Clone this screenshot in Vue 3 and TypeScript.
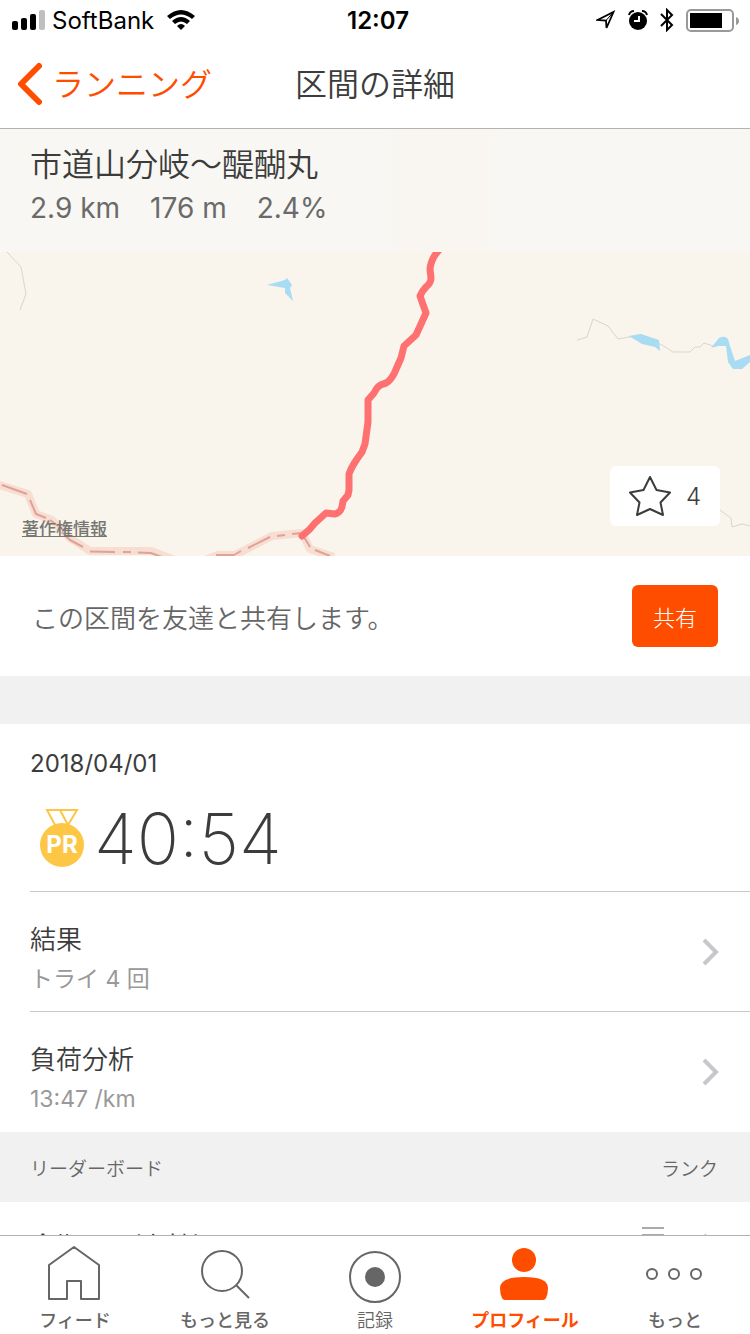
<script setup lang="ts">
import { ref } from 'vue'

interface Tab {
  id: string
  label: string
  light?: boolean
}

interface DetailRow {
  title: string
  detail: string
}

const tabs: Tab[] = [
  { id: 'feed', label: 'フィード' },
  { id: 'explore', label: 'もっと見る' },
  { id: 'record', label: '記録', light: true },
  { id: 'profile', label: 'プロフィール' },
  { id: 'more', label: 'もっと' },
]

const stats: string[] = ['2.9 km', '176 m', '2.4%']

const rows: DetailRow[] = [
  { title: '結果', detail: 'トライ 4 回' },
  { title: '負荷分析', detail: '13:47 /km' },
]

const activeTab = ref('profile')
</script>

<template>
  <div class="screen">
    <header class="top">
      <div class="status">
        <div class="status-side">
          <svg class="signal" viewBox="0 0 34 20" width="34" height="20" aria-hidden="true">
            <rect x="0" y="11" width="6" height="9" rx="2" />
            <rect x="9" y="8" width="6" height="12" rx="2" />
            <rect x="18" y="4" width="6" height="16" rx="2" />
            <rect x="27" y="0" width="6" height="20" rx="2" fill="#bfbfbf" />
          </svg>
          <span class="carrier">SoftBank</span>
          <svg class="wifi" viewBox="0 0 28 20" width="28" height="20" aria-hidden="true">
            <path d="M0 6Q14-6 28 6L25 9Q14 0 3 9Z" />
            <path d="M5 11Q14 3 23 11L20 14Q14 9 8 14Z" />
            <path d="M10 16Q14 12 18 16L14 20Z" />
          </svg>
        </div>
        <time class="clock">12:07</time>
        <div class="status-side status-right">
          <svg viewBox="0 0 20 22" width="20" height="22" aria-hidden="true">
            <path d="M1.500 11 17.500 3 10.500 19 10 11.500Z" fill="none" stroke="#000" stroke-width="1.800" />
            <path d="M10 11.500 17.500 3" fill="none" stroke="#000" stroke-width="1" />
          </svg>
          <svg viewBox="0 0 20 20" width="20" height="20" aria-hidden="true">
            <circle cx="10" cy="11" r="9" />
            <path d="M1 5Q2 1 6 1M14 1Q18 1 19 5" fill="none" stroke="#000" stroke-width="2" />
            <path d="M11 6V11H6" fill="none" stroke="#fff" stroke-width="2" />
          </svg>
          <svg viewBox="0 0 14 24" width="14" height="24" aria-hidden="true">
            <path d="M1 6 12 17 7 22V2L12 7 1 18" fill="none" stroke="#000" stroke-width="2" />
          </svg>
          <svg class="battery" viewBox="0 0 54 24" width="54" height="24" aria-hidden="true">
            <rect x="1" y="2" width="46" height="21" rx="4" fill="none" stroke="#999" stroke-width="2" />
            <rect x="4" y="5" width="32" height="15" />
            <path d="M50 9Q53 10 53 13T50 17Z" fill="#999" />
          </svg>
        </div>
      </div>
      <nav class="navbar">
        <button class="back" type="button">
          <svg viewBox="0 0 26 44" width="26" height="44" aria-hidden="true">
            <path d="M23 4 5 22 23 40" fill="none" stroke="#ff4d00" stroke-width="6" stroke-linecap="round" stroke-linejoin="round" />
          </svg>
          <span class="nav-text">ランニング</span>
        </button>
        <h1 class="nav-text">区間の詳細</h1>
      </nav>
    </header>

    <main class="content">
      <section class="segment">
        <h2 class="segment-name">市道山分岐〜醍醐丸</h2>
        <div class="stats">
          <span v-for="s in stats" :key="s">{{ s }}</span>
        </div>
      </section>

      <section class="map">
        <svg class="map-art" viewBox="0 252 750 304" preserveAspectRatio="xMidYMid slice" aria-hidden="true">
          <g fill="none" stroke="#d6d6d0" stroke-width="1">
            <path d="M7 252 21 267 26 294 20 310" />
            <path d="M577 340 587 337 593 319 608 326 618 339 640 335 662 345 673 352H690L695 347H700L704 343 716 347" />
            <path d="M720 510 731 518 732 527 742 524 750 526" />
          </g>
          <g fill="#a9dcf2">
            <path d="M267 285 285 280 287 278 292 285 290 288 293 301 285 293V288Z" />
            <path d="M629 336 641 334 659 340 660 351 655 347 642 344Z" />
            <path d="M711 348 719 338Q725 335 728 339L730 346 735 361 750 355V362L742 369H733L728 362 726 346 718 346Z" />
          </g>
          <g fill="none" stroke-linejoin="round">
            <g stroke="#f8ddd3" stroke-width="8">
              <path d="M-4 484 28 494 36 514 52 520 70 538 90 551H151L180 562" />
              <path d="M200 562 218 555H235L272 536 302 533 310 549 334 557" />
            </g>
            <g stroke="#dfa294" stroke-width="2">
              <path d="M2 485 27 494M30 500 36 514 46 518M50 520 58 526M62 532 70 540 83 547M90 551.500 115 552M123 552H131M138 552.500 151 553 162 557M216 555H234L241 551M248 548 270 537M277 536 285 535M292 534 302 533M304 537 310 547M315 550 330 556" />
            </g>
            <path d="M440 249Q431 258 430 269L431 278Q431 283 426 287 422 291 420 296L426 313 416 335 404 346 401 358 397 367Q391 383 383 384 378 385 374 393L368 400V422L365 444 362 452 357 459Q351 468 349 474V490L348 495 343 501 342 507Q340 513 335 514L326 513 315 523Q310 530 302 536" stroke="#ff7070" stroke-width="7" stroke-linecap="round" />
          </g>
        </svg>
        <a class="legal" href="#legal">著作権情報</a>
        <button class="star" type="button" aria-label="お気に入り 4">
          <svg viewBox="0 0 44 42" width="44" height="42" aria-hidden="true">
            <path d="M22 2 28.500 15 42 17.500 32.500 27.500 35 40 22 34 9 40 11.500 27.500 2 17.500 15.500 15Z" fill="none" stroke="#3c3c3c" stroke-width="2" stroke-linejoin="round" />
          </svg>
          <span>4</span>
        </button>
      </section>

      <section class="share">
        <p class="share-text">この区間を友達と共有します。</p>
        <button class="share-button" type="button">共有</button>
      </section>

      <div class="gap"></div>

      <section class="effort">
        <time class="date">2018/04/01</time>
        <div class="result">
          <svg viewBox="0 0 44 58" width="44" height="58" aria-hidden="true">
            <path d="M7 1H37L28 16H15ZM20 1 28 16" fill="none" stroke="#fdc745" stroke-width="2" />
            <circle cx="22" cy="36" r="22" fill="#fdc745" />
            <text class="medal-text" x="22" y="44" text-anchor="middle">PR</text>
          </svg>
          <span class="elapsed">40:54</span>
        </div>
      </section>

      <section class="rows">
        <button v-for="r in rows" :key="r.title" class="row" type="button">
          <span class="row-copy">
            <span class="row-title">{{ r.title }}</span>
            <span class="row-detail">{{ r.detail }}</span>
          </span>
          <svg viewBox="0 0 18 28" width="18" height="28" aria-hidden="true">
            <path d="M2 2 14 14 2 26" fill="none" stroke="#c7c7cc" stroke-width="4" />
          </svg>
        </button>
      </section>

      <div class="board-head">
        <span>リーダーボード</span>
        <span>ランク</span>
      </div>
      <button class="board-row" type="button">
        <span class="board-name">全期間 （女性）</span>
        <span class="board-rank">
          <svg viewBox="0 0 24 28" width="24" height="28" aria-hidden="true">
            <path d="M0 1H22M0 8H22M0 15H22" fill="none" stroke="#aaa" stroke-width="2" />
          </svg>
          <svg viewBox="0 0 18 32" width="18" height="32" aria-hidden="true">
            <path d="M2 8 14 20 2 32" fill="none" stroke="#c7c7cc" stroke-width="4" />
          </svg>
        </span>
      </button>
    </main>

    <nav class="tabbar">
      <button
        v-for="t in tabs"
        :key="t.id"
        type="button"
        class="tab"
        :class="{ active: activeTab === t.id, light: t.light }"
        @click="activeTab = t.id"
      >
        <svg class="tab-icon" viewBox="0 0 60 60" width="60" height="60" fill="none" stroke="currentColor" stroke-width="2" stroke-linejoin="round" aria-hidden="true">
          <path v-if="t.id === 'feed'" d="M29 5 54 23V57H36V39H22V57H4V23Z" />
          <template v-else-if="t.id === 'explore'">
            <circle cx="27" cy="29" r="20" />
            <path d="M41 43 54 56" />
          </template>
          <template v-else-if="t.id === 'record'">
            <circle cx="30" cy="35" r="25" />
            <circle cx="30" cy="35" r="10" fill="currentColor" stroke="none" />
          </template>
          <g v-else-if="t.id === 'profile'" fill="currentColor" stroke="none">
            <circle cx="29" cy="18" r="12" />
            <path d="M5 46Q5 35 29 35T53 46Q53 52 51 56 50 58 48 58H10Q8 58 7 56 5 52 5 46Z" />
          </g>
          <g v-else>
            <circle cx="7" cy="32" r="5" />
            <circle cx="29" cy="32" r="5" />
            <circle cx="51" cy="32" r="5" />
          </g>
        </svg>
        <span class="tab-label">{{ t.label }}</span>
      </button>
    </nav>
  </div>
</template>

<style>
body {
  margin: 0;
  background: #fff;
}
</style>

<style scoped>
.screen {
  display: flex;
  flex-direction: column;
  height: 100vh;
  overflow: hidden;
  background: #fff;
  color: #3c3c3c;
  font-family: Inter, "Noto Sans CJK JP", sans-serif;
  font-weight: 350;
}

.screen * {
  box-sizing: border-box;
}

.screen svg {
  display: block;
  flex-shrink: 0;
}

button {
  margin: 0;
  padding: 0;
  border: 0;
  background: none;
  color: inherit;
  font: inherit;
  text-align: left;
  cursor: pointer;
}

h1,
h2,
p {
  margin: 0;
  font-weight: inherit;
}

.top {
  flex-shrink: 0;
  border-bottom: 1px solid #b2b2b2;
}

.status,
.navbar {
  display: grid;
  grid-template-columns: 1fr auto 1fr;
  align-items: center;
}

.status {
  height: 40px;
  padding: 0 10px 0 12px;
  color: #000;
}

.status-side {
  display: flex;
  align-items: center;
  font-size: 24px;
  font-weight: 400;
}

.carrier {
  margin: 0 13px 0 6px;
}

.status-right {
  justify-content: flex-end;
  gap: 12px;
}

.clock {
  padding-left: 4px;
  font-size: 24px;
  font-weight: 600;
}

.navbar {
  height: 88px;
  padding: 0 16px;
}

.back {
  display: flex;
  align-items: center;
  gap: 10px;
  color: #ff4d00;
}

.nav-text {
  padding-bottom: 4px;
  font-size: 32px;
}

.content {
  flex: 1;
  min-height: 0;
  overflow: hidden;
}

.segment {
  height: 123px;
  padding: 12px 30px;
  background: linear-gradient(90deg, #f8f7f3 50%, #f9f5f1 56%, #f9f5f1 62%, #f8f7f3 68%);
}

.segment-name {
  font-size: 32px;
  line-height: 48px;
}

.stats {
  display: flex;
  gap: 30px;
  color: #6a6a6a;
  font-size: 28px;
  font-weight: 400;
  line-height: 38px;
}

.map {
  position: relative;
  height: 304px;
  background: #f9f4ec;
}

.screen .map-art {
  width: 100%;
  height: 100%;
}

.legal {
  position: absolute;
  left: 22px;
  bottom: 15px;
  color: #777772;
  font-size: 17px;
  font-weight: 500;
  line-height: 24px;
}

.star {
  position: absolute;
  right: 30px;
  bottom: 30px;
  display: flex;
  align-items: center;
  gap: 14px;
  height: 60px;
  padding: 0 19px 0 18px;
  border-radius: 6px;
  background: #fff;
  font-size: 24px;
}

.share {
  display: flex;
  align-items: center;
  justify-content: space-between;
  height: 120px;
  padding: 0 32px;
}

.share-text {
  color: #666;
  font-size: 26px;
}

.share-button {
  height: 62px;
  padding: 0 21px;
  border-radius: 6px;
  background: #ff4d00;
  color: #fff;
  font-size: 22px;
  font-weight: 300;
}

.gap {
  height: 48px;
  background: #f1f1f1;
}

.effort {
  height: 168px;
  margin-left: 30px;
  padding-top: 24px;
  border-bottom: 1px solid #c8c8c8;
}

.date {
  display: block;
  font-size: 24px;
  font-weight: 400;
  line-height: 32px;
}

.result {
  display: flex;
  align-items: center;
  gap: 10px;
  height: 88px;
  margin-top: 14px;
  padding-left: 10px;
}

.medal-text {
  fill: #fff;
  font-size: 24px;
  font-weight: 700;
}

.elapsed {
  font-size: 70px;
  font-weight: 200;
}

.row {
  display: flex;
  align-items: center;
  justify-content: space-between;
  width: calc(100% - 30px);
  height: 120px;
  margin-left: 30px;
  padding-right: 30px;
}

.row:first-child {
  border-bottom: 1px solid #c8c8c8;
}

.row-copy {
  display: flex;
  flex-direction: column;
  padding-top: 14px;
}

.row-title {
  font-size: 26px;
  line-height: 40px;
}

.row-detail {
  color: #999;
  font-size: 23px;
  font-weight: 400;
  line-height: 38px;
}

.board-head {
  display: flex;
  align-items: center;
  justify-content: space-between;
  height: 70px;
  padding: 0 32px 0 30px;
  background: #f1f1f1;
  color: #666;
  font-size: 19px;
}

.board-row {
  display: flex;
  align-items: flex-start;
  justify-content: space-between;
  width: 100%;
  height: 88px;
  padding: 25px 30px;
}

.board-name {
  font-size: 26px;
  line-height: 40px;
}

.board-rank {
  display: flex;
  gap: 36px;
}

.tabbar {
  display: grid;
  grid-template-columns: repeat(5, 1fr);
  flex-shrink: 0;
  height: 99px;
  border-top: 1px solid #b2b2b2;
  background: #fff;
}

.tab {
  display: flex;
  flex-direction: column;
  align-items: center;
  padding-top: 6px;
  color: #666;
}

.tab-icon {
  overflow: visible;
}

.tab-label {
  margin-top: 6px;
  font-size: 18px;
  font-weight: 500;
  line-height: 26px;
}

.light .tab-label {
  font-weight: 350;
}

.active {
  color: #ff4d00;
}

.active .tab-label {
  font-weight: 700;
}
</style>
